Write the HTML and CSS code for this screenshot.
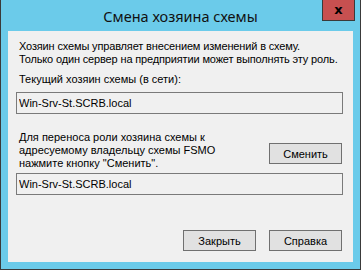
FILE: index.html
```html
<!DOCTYPE html>
<html lang="ru">

<head>
  <meta charset="UTF-8">
  <title>Смена хозяина схемы</title>
  <link rel="stylesheet" href="styles.css">
</head>

<body>
  <div class="window">
    <div class="titlebar">
      <span></span>
      <div class="title">Смена хозяина схемы</div>
      <button class="close" type="button">x</button>
    </div>

    <div class="client">
      <p class="intro">
        Хозяин схемы управляет внесением изменений в схему.<br>
        Только один сервер на предприятии может выполнять эту роль.
      </p>

      <label class="label" for="currentOwner">Текущий хозяин схемы (в сети):</label>
      <input class="field" id="currentOwner" type="text" value="Win-Srv-St.SCRB.local" readonly>

      <div class="transfer">
        <p class="label">
          Для переноса роли хозяина схемы к<br>
          адресуемому владельцу схемы FSMO<br>
          нажмите кнопку "Сменить".
        </p>
        <button class="btn btn-change" type="button">Сменить</button>
      </div>
      <input class="field" type="text" value="Win-Srv-St.SCRB.local" readonly>

      <div class="actions">
        <button class="btn" type="button">Закрыть</button>
        <button class="btn" type="button">Справка</button>
      </div>
    </div>
  </div>
</body>

</html>
```

FILE: styles.css
```css
* {
  margin: 0;
  padding: 0;
  box-sizing: border-box;
}

body {
  font-family: 'Liberation Sans', Arial, sans-serif;
  font-size: 11px;
  color: #000;
  background: #6bcbea;
}

.window {
  width: 361px;
  height: 270px;
  background: #6bcbea;
  border: 1px solid #3a3a3a;
  border-top: none;
  display: flex;
  flex-direction: column;
}

.titlebar {
  height: 31px;
  display: grid;
  grid-template-columns: 1fr auto 1fr;
  align-items: start;
}

.title {
  font-family: 'Noto Sans', 'Open Sans', sans-serif;
  font-size: 14.5px;
  line-height: 20px;
  padding-top: 6px;
  color: #111;
}

.close {
  justify-self: end;
  width: 33px;
  height: 21px;
  margin-right: 5px;
  background: #c75050;
  border: 1px solid #3a3a3a;
  border-top: none;
  color: #000;
  font-family: 'DejaVu Sans', sans-serif;
  font-weight: bold;
  font-size: 13px;
  line-height: 16px;
}

.client {
  flex: 1;
  margin: 0 7px 7px 7px;
  background: #f0f0f0;
  padding: 9px 10px 0 8px;
  display: flex;
  flex-direction: column;
}

.intro,
.label {
  line-height: 13px;
  padding-left: 3px;
  white-space: nowrap;
}

.intro {
  margin-bottom: 7px;
  letter-spacing: -0.15px;
}

.label {
  display: block;
}

.field {
  width: 100%;
  height: 22px;
  margin-top: 6px;
  border: 1px solid #7a7a7a;
  background: #f0f0f0;
  font-family: inherit;
  font-size: 11px;
  padding: 0 2px;
  color: #000;
  outline: none;
}

.transfer {
  display: flex;
  justify-content: space-between;
  align-items: flex-start;
  margin-top: 17px;
}

.btn {
  width: 73px;
  height: 21px;
  background: #e1e1e1;
  border: 1px solid #707070;
  font-family: inherit;
  font-size: 11px;
  color: #000;
}

.btn-change {
  margin-top: 12px;
  margin-right: 1px;
}

.transfer + .field {
  margin-top: 3px;
}

.actions {
  margin-top: auto;
  margin-bottom: 11px;
  display: flex;
  justify-content: flex-end;
  gap: 13px;
  padding-right: 1px;
}
```
